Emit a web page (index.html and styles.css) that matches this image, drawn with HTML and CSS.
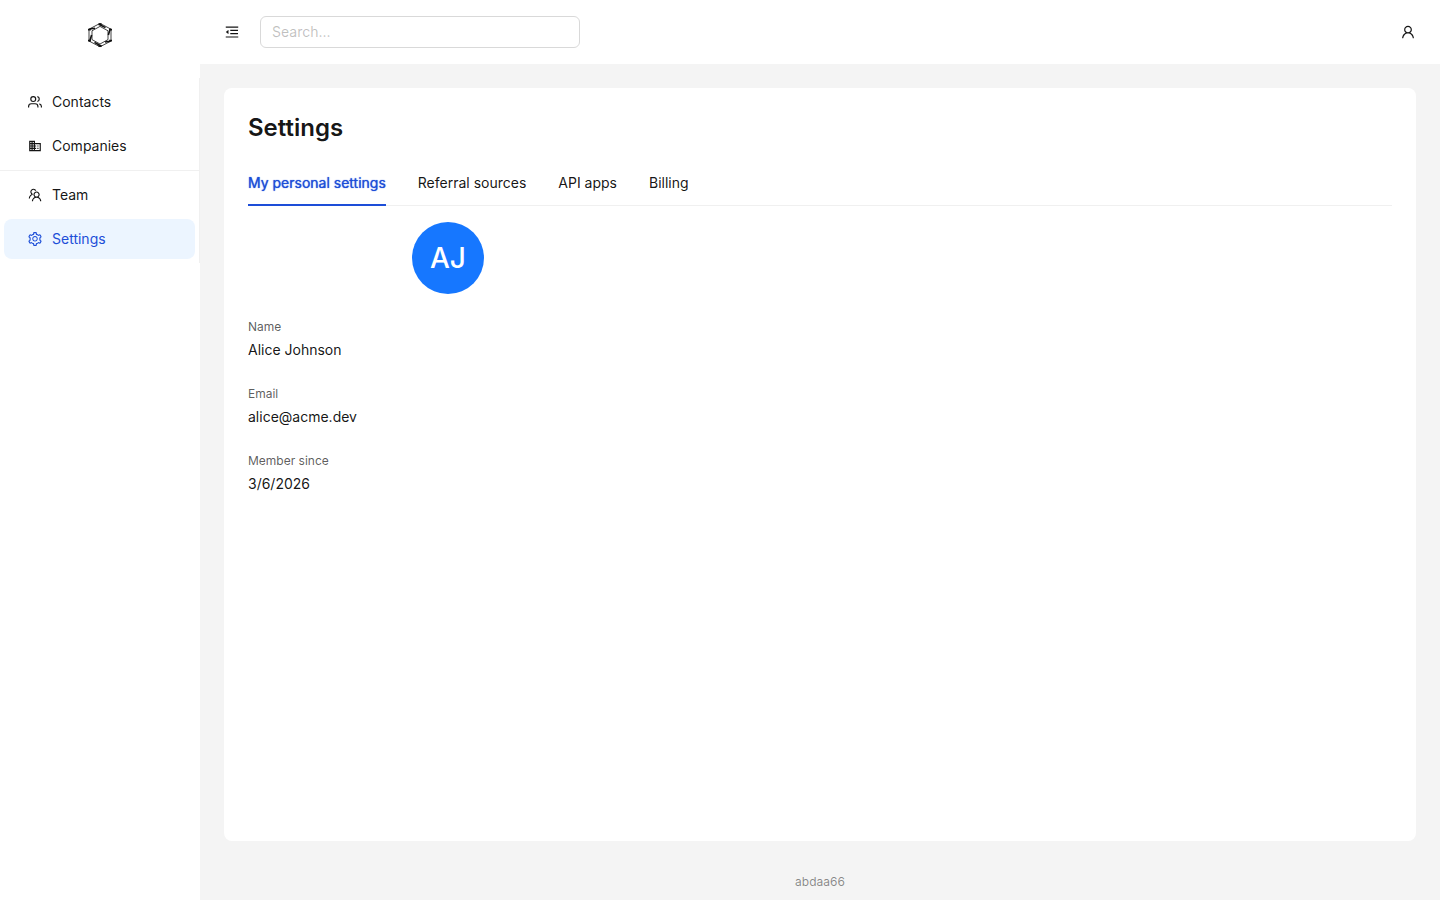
FILE: index.html
```html
<!DOCTYPE html>
<html lang="en">
<head>
    <meta charset="UTF-8">
    <meta name="viewport" content="width=device-width, initial-scale=1.0">
    <title>Settings</title>
    <link rel="stylesheet" href="styles.css">
</head>
<body>

<div class="layout">
    <!-- Sidebar -->
    <aside class="sidebar">
        <a href="#" class="logo" aria-label="Home">
            <svg width="28" height="28" viewBox="0 0 28 28" fill="none" stroke="#111">
                <path d="M14 2.4 25 8.2V20L14 25.8 3 20V8.2Z" stroke-width="0.8"/>
                <path d="M14 5.4 22 9.8V18.6L14 23 6 18.6V9.8Z" stroke-width="0.8"/>
                <path d="M13 3.2 19.5 6.6M24.2 7.6 22.4 14M24.4 20.2 19 21M15 25 8.5 21.4M3.6 20.6 5.6 14M3.6 8 9 7.2" stroke-width="1.6"/>
                <path d="M12.4 3.4 15.6 3.2M23.2 8.6H26M23.2 19.6H26M12.4 24.8 15.6 25M2 19.6H4.8M2 8.6H4.8" stroke-width="1.8"/>
            </svg>
        </a>
        <nav>
            <ul class="menu">
                <li>
                    <a href="#" class="menu-item">
                        <svg class="icon" viewBox="0 0 24 24" fill="none" stroke="currentColor" stroke-width="2">
                            <circle cx="9" cy="7" r="4.2"/>
                            <path d="M1 21.5v-1.7A4.8 4.8 0 0 1 5.8 15h6.4a4.8 4.8 0 0 1 4.8 4.8v1.7M16 2.9a4.2 4.2 0 0 1 0 8.2M19.5 15.2a4.8 4.8 0 0 1 3.5 4.6v1.7"/>
                        </svg>
                        Contacts
                    </a>
                </li>
                <li>
                    <a href="#" class="menu-item">
                        <svg class="icon" viewBox="0 0 24 24" fill="currentColor">
                            <path d="M12 7V3H2v18h20V7H12zM6 19H4v-2h2v2zm0-4H4v-2h2v2zm0-4H4V9h2v2zm0-4H4V5h2v2zm4 12H8v-2h2v2zm0-4H8v-2h2v2zm0-4H8V9h2v2zm0-4H8V5h2v2zm10 12h-8v-2h2v-2h-2v-2h2v-2h-2V9h8v10zm-2-8h-2v2h2v-2zm0 4h-2v2h2v-2z"/>
                        </svg>
                        Companies
                    </a>
                </li>
                <li class="menu-divider" role="separator"></li>
                <li>
                    <a href="#" class="menu-item">
                        <svg class="icon" viewBox="64 64 896 896" fill="currentColor">
                            <path d="M824.2 699.9a301.55 301.55 0 00-86.4-60.4C783.1 602.8 812 546.8 812 484c0-110.8-92.4-201.7-203.2-200-109.1 1.7-197 90.6-197 200 0 62.8 29 118.8 74.2 155.5a300.95 300.95 0 00-86.4 60.4C345 754.6 314 826.8 312 903.8a8 8 0 008 8.2h56c4.3 0 7.9-3.4 8-7.7 1.9-58 25.4-112.3 66.7-153.5A226.62 226.62 0 01612 684c60.9 0 118.2 23.7 161.3 66.8C814.6 792 838 846.3 840 904.3c.1 4.3 3.7 7.7 8 7.7h56a8 8 0 008-8.2c-2-77-33-149.2-87.8-203.9zM612 612c-34.2 0-66.4-13.3-90.5-37.5a126.86 126.86 0 01-37.5-91.8c.3-32.8 13.4-64.5 36.3-88 24-24.6 56.1-38.3 90.4-38.7 33.9-.3 66.8 12.9 91 36.6 24.8 24.3 38.4 56.8 38.4 91.4 0 34.2-13.3 66.3-37.5 90.5A127.3 127.3 0 01612 612zM361.5 510.4c-.9-8.7-1.4-17.5-1.4-26.4 0-15.9 1.5-31.4 4.3-46.5.7-3.6-1.2-7.3-4.5-8.8-13.6-6.1-26.1-14.5-36.9-25.1a127.54 127.54 0 01-38.7-95.4c.9-32.1 13.8-62.6 36.3-85.6 24.7-25.3 57.9-39.1 93.2-38.7 31.9.3 62.7 12.6 86 34.4 7.9 7.4 14.7 15.6 20.4 24.4 2 3.1 5.9 4.4 9.3 3.2 17.6-6.1 36.2-10.4 55.3-12.4 5.6-.6 8.8-6.6 6.3-11.6-32.5-64.3-98.9-108.7-175.7-109.9-110.9-1.7-203.3 89.2-203.3 199.9 0 62.8 28.9 118.8 74.2 155.5-31.8 14.7-61.1 35-86.5 60.4-54.8 54.7-85.8 126.9-87.8 204a8 8 0 008 8.2h56.1c4.3 0 7.9-3.4 8-7.7 1.9-58 25.4-112.3 66.7-153.5 29.4-29.4 65.4-49.8 104.7-59.7 3.9-1 6.5-4.7 6-8.7z"/>
                        </svg>
                        Team
                    </a>
                </li>
                <li>
                    <a href="#" class="menu-item active">
                        <svg class="icon" viewBox="64 64 896 896" fill="currentColor">
                            <path d="M924.8 625.7l-65.5-56c3.1-19 4.7-38.4 4.7-57.8s-1.6-38.8-4.7-57.8l65.5-56a32.03 32.03 0 009.3-35.2l-.9-2.6a443.74 443.74 0 00-79.7-137.9l-1.8-2.1a32.12 32.12 0 00-35.1-9.5l-81.3 28.9c-30-24.6-63.5-44-99.7-57.6l-15.7-85a32.05 32.05 0 00-25.8-25.7l-2.7-.5c-52.1-9.4-106.9-9.4-159 0l-2.7.5a32.05 32.05 0 00-25.8 25.7l-15.8 85.4a351.86 351.86 0 00-99 57.4l-81.9-29.1a32 32 0 00-35.1 9.5l-1.8 2.1a446.02 446.02 0 00-79.7 137.9l-.9 2.6c-4.5 12.5-.8 26.5 9.3 35.2l66.3 56.6c-3.1 18.8-4.6 38-4.6 57.1 0 19.2 1.5 38.4 4.6 57.1L99 625.5a32.03 32.03 0 00-9.3 35.2l.9 2.6c18.1 50.4 44.9 96.9 79.7 137.9l1.8 2.1a32.12 32.12 0 0035.1 9.5l81.9-29.1c29.8 24.5 63.1 43.9 99 57.4l15.8 85.4a32.05 32.05 0 0025.8 25.7l2.7.5a449.4 449.4 0 00159 0l2.7-.5a32.05 32.05 0 0025.8-25.7l15.7-85a350 350 0 0099.7-57.6l81.3 28.9a32 32 0 0035.1-9.5l1.8-2.1c34.8-41.1 61.6-87.5 79.7-137.9l.9-2.6c4.5-12.3.8-26.3-9.3-35zM788.3 465.9c2.5 15.1 3.8 30.6 3.8 46.1s-1.3 31-3.8 46.1l-6.6 40.1 74.7 63.9a370.03 370.03 0 01-42.6 73.6L721 702.8l-31.4 25.8c-23.9 19.6-50.5 35-79.3 45.8l-38.1 14.3-17.9 97a377.5 377.5 0 01-85 0l-17.9-97.2-37.8-14.5c-28.5-10.8-55-26.2-78.7-45.7l-31.4-25.9-93.4 33.2c-17-22.9-31.2-47.6-42.6-73.6l75.5-64.5-6.5-40c-2.4-14.9-3.7-30.3-3.7-45.5 0-15.3 1.2-30.6 3.7-45.5l6.5-40-75.5-64.5c11.3-26.1 25.6-50.7 42.6-73.6l93.4 33.2 31.4-25.9c23.7-19.5 50.2-34.9 78.7-45.7l37.9-14.3 17.9-97.2c28.1-3.2 56.8-3.2 85 0l17.9 97 38.1 14.3c28.7 10.8 55.4 26.2 79.3 45.8l31.4 25.8 92.8-32.9c17 22.9 31.2 47.6 42.6 73.6L781.8 426l6.5 39.9zM512 326c-97.2 0-176 78.8-176 176s78.8 176 176 176 176-78.8 176-176-78.8-176-176-176zm79.2 255.2A111.6 111.6 0 01512 614c-29.9 0-58-11.7-79.2-32.8A111.6 111.6 0 01400 502c0-29.9 11.7-58 32.8-79.2C454 401.6 482.1 390 512 390c29.9 0 58 11.6 79.2 32.8A111.6 111.6 0 01624 502c0 29.9-11.7 58-32.8 79.2z"/>
                        </svg>
                        Settings
                    </a>
                </li>
            </ul>
        </nav>
    </aside>

    <div class="main">
        <!-- Top bar -->
        <header class="header">
            <button type="button" class="icon-button" aria-label="Collapse menu">
                <svg class="icon" viewBox="64 64 896 896" fill="currentColor">
                    <path d="M408 442h480c4.4 0 8-3.6 8-8v-56c0-4.4-3.6-8-8-8H408c-4.4 0-8 3.6-8 8v56c0 4.4 3.6 8 8 8zm-8 204c0 4.4 3.6 8 8 8h480c4.4 0 8-3.6 8-8v-56c0-4.4-3.6-8-8-8H408c-4.4 0-8 3.6-8 8v56zm504-486H120c-4.4 0-8 3.6-8 8v56c0 4.4 3.6 8 8 8h784c4.4 0 8-3.6 8-8v-56c0-4.4-3.6-8-8-8zm0 632H120c-4.4 0-8 3.6-8 8v56c0 4.4 3.6 8 8 8h784c4.4 0 8-3.6 8-8v-56c0-4.4-3.6-8-8-8zM115.4 518.9L271.7 642c5.8 4.6 14.4.5 14.4-6.9V388.9c0-7.4-8.5-11.5-14.4-6.9L115.4 505.1a8.74 8.74 0 000 13.8z"/>
                </svg>
            </button>
            <input type="search" class="search" placeholder="Search..." aria-label="Search">
            <button type="button" class="icon-button account" aria-label="Account">
                <svg class="icon" viewBox="64 64 896 896" fill="currentColor">
                    <path d="M858.5 763.6a374 374 0 00-80.6-119.5 375.63 375.63 0 00-119.5-80.6c-.4-.2-.8-.3-1.2-.5C719.5 518 760 444.7 760 362c0-137-111-248-248-248S264 225 264 362c0 82.7 40.5 156 102.8 201.1-.4.2-.8.3-1.2.5-44.8 18.9-85 46-119.5 80.6a375.63 375.63 0 00-80.6 119.5A371.7 371.7 0 00136 901.8a8 8 0 008 8.2h60c4.4 0 7.9-3.5 8-7.8 2-77.2 33-149.5 87.8-204.3 56.7-56.7 132-87.9 212.2-87.9s155.5 31.2 212.2 87.9C779 752.7 810 825 812 902.2c.1 4.4 3.6 7.8 8 7.8h60a8 8 0 008-8.2c-1-47.8-10.9-94.3-29.5-138.2zM512 534c-45.9 0-89.1-17.9-121.6-50.4S340 407.9 340 362c0-45.9 17.9-89.1 50.4-121.6S466.1 190 512 190s89.1 17.9 121.6 50.4S684 316.1 684 362c0 45.9-17.9 89.1-50.4 121.6S557.9 534 512 534z"/>
                </svg>
            </button>
        </header>

        <!-- Settings card -->
        <main class="card">
            <h1>Settings</h1>
            <div class="tabs" role="tablist">
                <button type="button" class="tab active" role="tab" aria-selected="true">My personal settings</button>
                <button type="button" class="tab" role="tab" aria-selected="false">Referral sources</button>
                <button type="button" class="tab" role="tab" aria-selected="false">API apps</button>
                <button type="button" class="tab" role="tab" aria-selected="false">Billing</button>
            </div>
            <div class="profile">
                <div class="avatar">AJ</div>
                <dl class="fields">
                    <div class="field">
                        <dt>Name</dt>
                        <dd>Alice Johnson</dd>
                    </div>
                    <div class="field">
                        <dt>Email</dt>
                        <dd>alice@acme.dev</dd>
                    </div>
                    <div class="field">
                        <dt>Member since</dt>
                        <dd>3/6/2026</dd>
                    </div>
                </dl>
            </div>
        </main>

        <footer class="footer">abdaa66</footer>
    </div>
</div>

</body>
</html>
```
FILE: styles.css
```css
/* General styles */
* {
    box-sizing: border-box;
}

body {
    margin: 0;
    font-family: Inter, "Liberation Sans", sans-serif;
    font-size: 14px;
    line-height: 22px;
    color: rgba(0, 0, 0, 0.92);
    background-color: #f4f4f4;
}

button,
input {
    font: inherit;
    color: inherit;
}

button {
    border: none;
    background: none;
    padding: 0;
    cursor: pointer;
}

.icon {
    display: block;
    width: 14px;
    height: 14px;
    flex-shrink: 0;
}

.layout {
    display: flex;
    min-height: 100vh;
}

/* Sidebar */
.sidebar {
    width: 200px;
    flex-shrink: 0;
    background-color: white;
}

.logo {
    display: flex;
    justify-content: center;
    padding: 21px 0 29px;
}

.logo svg {
    display: block;
}

.menu {
    list-style-type: none;
    margin: 0;
    padding: 4px 0;
    display: flex;
    flex-direction: column;
    gap: 4px;
    border-right: 1px solid #f0f0f0;
}

.menu-item {
    display: flex;
    align-items: center;
    gap: 10px;
    height: 40px;
    margin: 0 4px;
    padding: 0 24px;
    border-radius: 8px;
    color: inherit;
    text-decoration: none;
}

.menu-item.active {
    background-color: #ecf5ff;
    color: #1d4ed8;
}

.menu-divider {
    height: 1px;
    background-color: #f0f0f0;
}

/* Main column */
.main {
    flex: 1;
    min-width: 0;
    display: flex;
    flex-direction: column;
}

.header {
    display: flex;
    align-items: center;
    gap: 20px;
    height: 64px;
    padding: 0 24px;
    background-color: white;
}

.icon-button {
    padding: 1px;
}

.account {
    margin-left: auto;
}

.search {
    width: 320px;
    height: 32px;
    padding: 0 11px 2px;
    border: 1px solid #d9d9d9;
    border-radius: 6px;
    background-color: white;
    outline: none;
}

.search::placeholder {
    color: rgba(0, 0, 0, 0.25);
}

/* Card */
.card {
    flex: 1;
    margin: 24px 24px 0;
    padding: 24px;
    border-radius: 8px;
    background-color: white;
}

h1 {
    margin: 0 0 16px;
    font-size: 24px;
    line-height: 32px;
    font-weight: 600;
}

.tabs {
    display: flex;
    gap: 32px;
    margin-bottom: 16px;
    box-shadow: inset 0 -1px #f0f0f0;
}

.tab {
    padding: 12px 0;
}

.tab.active {
    color: #1d4ed8;
    text-shadow: 0 0 1px currentColor;
    box-shadow: inset 0 -2px #1d4ed8;
}

/* Profile */
.profile {
    max-width: 400px;
}

.avatar {
    width: 72px;
    height: 72px;
    margin: 0 auto 22px;
    border-radius: 50%;
    background-color: #1677ff;
    color: white;
    font-size: 28px;
    font-weight: 500;
    line-height: 72px;
    text-align: center;
}

.fields {
    margin: 0;
    display: flex;
    flex-direction: column;
    gap: 20px;
}

.field dt {
    font-size: 12px;
    line-height: 21px;
    color: rgba(0, 0, 0, 0.65);
}

.field dd {
    margin: 0;
    line-height: 26px;
}

.footer {
    padding: 30px 24px 7px;
    font-size: 12px;
    text-align: center;
    color: rgba(0, 0, 0, 0.45);
}
```
